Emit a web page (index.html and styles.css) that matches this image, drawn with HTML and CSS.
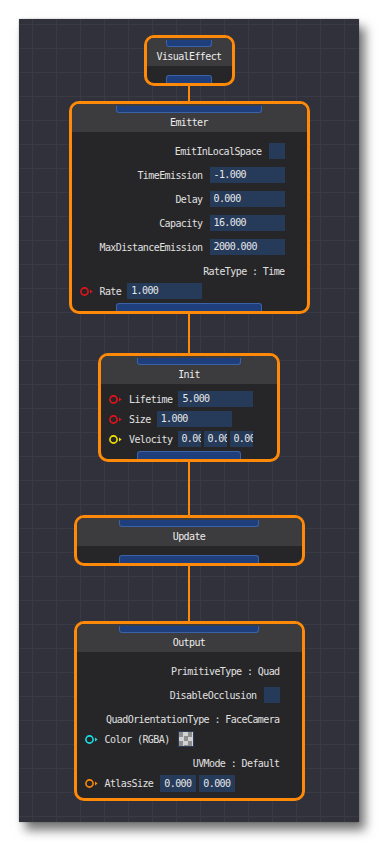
FILE: index.html
```html
<!DOCTYPE html>
<html lang="en">
<head>
    <meta charset="UTF-8">
    <meta name="viewport" content="width=device-width, initial-scale=1.0">
    <title>Visual Effect Graph</title>
    <link rel="stylesheet" href="styles.css">
</head>
<body>
    <div class="canvas">
        <div class="node node-ve">
            <div class="node-head">
                <div class="port port-in"></div>
                <div class="node-title">VisualEffect</div>
            </div>
            <div class="node-body node-body-empty">
                <div class="port port-out"></div>
            </div>
        </div>

        <div class="link link-a"></div>

        <div class="node node-emitter">
            <div class="node-head">
                <div class="port port-in"></div>
                <div class="node-title">Emitter</div>
            </div>
            <div class="node-body">
                <div class="row row-right"><span class="label">EmitInLocalSpace</span><span class="check"></span></div>
                <div class="row row-right"><span class="label">TimeEmission</span><span class="field">-1.000</span></div>
                <div class="row row-right"><span class="label">Delay</span><span class="field">0.000</span></div>
                <div class="row row-right"><span class="label">Capacity</span><span class="field">16.000</span></div>
                <div class="row row-right"><span class="label">MaxDistanceEmission</span><span class="field">2000.000</span></div>
                <div class="row row-right"><span class="label">RateType : Time</span></div>
                <div class="row row-pin">
                    <svg class="pin pin-red" viewBox="0 0 13 9"><circle cx="4.5" cy="4.5" r="3.6" fill="none" stroke="currentColor" stroke-width="1.6"/><path d="M10 2.5L12.6 4.5L10 6.5Z" fill="currentColor"/></svg>
                    <span class="label">Rate</span><span class="field">1.000</span>
                </div>
                <div class="port port-out"></div>
            </div>
        </div>

        <div class="link link-b"></div>

        <div class="node node-init">
            <div class="node-head">
                <div class="port port-in"></div>
                <div class="node-title">Init</div>
            </div>
            <div class="node-body">
                <div class="row row-pin">
                    <svg class="pin pin-red" viewBox="0 0 13 9"><circle cx="4.5" cy="4.5" r="3.6" fill="none" stroke="currentColor" stroke-width="1.6"/><path d="M10 2.5L12.6 4.5L10 6.5Z" fill="currentColor"/></svg>
                    <span class="label">Lifetime</span><span class="field">5.000</span>
                </div>
                <div class="row row-pin">
                    <svg class="pin pin-red" viewBox="0 0 13 9"><circle cx="4.5" cy="4.5" r="3.6" fill="none" stroke="currentColor" stroke-width="1.6"/><path d="M10 2.5L12.6 4.5L10 6.5Z" fill="currentColor"/></svg>
                    <span class="label">Size</span><span class="field">1.000</span>
                </div>
                <div class="row row-pin">
                    <svg class="pin pin-yellow" viewBox="0 0 13 9"><circle cx="4.5" cy="4.5" r="3.6" fill="none" stroke="currentColor" stroke-width="1.6"/><path d="M10 2.5L12.6 4.5L10 6.5Z" fill="currentColor"/></svg>
                    <span class="label">Velocity</span>
                    <span class="field-group">
                        <span class="field field-tiny">0.000</span>
                        <span class="field field-tiny">0.000</span>
                        <span class="field field-tiny">0.000</span>
                    </span>
                </div>
                <div class="port port-out"></div>
            </div>
        </div>

        <div class="link link-c"></div>

        <div class="node node-update">
            <div class="node-head">
                <div class="port port-in"></div>
                <div class="node-title">Update</div>
            </div>
            <div class="node-body node-body-empty">
                <div class="port port-out"></div>
            </div>
        </div>

        <div class="link link-d"></div>

        <div class="node node-output">
            <div class="node-head">
                <div class="port port-in"></div>
                <div class="node-title">Output</div>
            </div>
            <div class="node-body node-body-last">
                <div class="row row-right"><span class="label">PrimitiveType : Quad</span></div>
                <div class="row row-right"><span class="label">DisableOcclusion</span><span class="check"></span></div>
                <div class="row row-right"><span class="label">QuadOrientationType : FaceCamera</span></div>
                <div class="row row-pin">
                    <svg class="pin pin-cyan" viewBox="0 0 13 9"><circle cx="4.5" cy="4.5" r="3.6" fill="none" stroke="currentColor" stroke-width="1.6"/><path d="M10 2.5L12.6 4.5L10 6.5Z" fill="currentColor"/></svg>
                    <span class="label label-color">Color (RGBA)</span><span class="swatch"></span>
                </div>
                <div class="row row-right"><span class="label">UVMode : Default</span></div>
                <div class="row row-pin">
                    <svg class="pin pin-orange" viewBox="0 0 13 9"><circle cx="4.5" cy="4.5" r="3.6" fill="none" stroke="currentColor" stroke-width="1.6"/><path d="M10 2.5L12.6 4.5L10 6.5Z" fill="currentColor"/></svg>
                    <span class="label label-atlas">AtlasSize</span>
                    <span class="field-group">
                        <span class="field field-half">0.000</span>
                        <span class="field field-half">0.000</span>
                    </span>
                </div>
            </div>
        </div>
    </div>
</body>
</html>
```

FILE: styles.css
```css
* {
    margin: 0;
    padding: 0;
    box-sizing: border-box;
}

body {
    background: #fff;
    padding: 19px 20px 20px 19px;
    font-family: 'DejaVu Sans Mono', 'Liberation Mono', monospace;
    font-size: 10px;
    letter-spacing: -0.6px;
    color: #e2e2e2;
}

/* Graph canvas with grid */
.canvas {
    width: 340px;
    height: 803px;
    padding-top: 16px;
    display: flex;
    flex-direction: column;
    align-items: center;
    background-color: #30313a;
    background-image:
        linear-gradient(to right, #393a43 1px, transparent 1px),
        linear-gradient(to bottom, #393a43 1px, transparent 1px);
    background-size: 24px 24px;
    background-position: 13px 5px;
    box-shadow:
        0 0 2px rgba(0, 0, 0, 0.25),
        6px 8px 10px rgba(0, 0, 0, 0.55);
}

.link {
    width: 2px;
    background: #ff8a0a;
}

.link-a { height: 15px; }
.link-b { height: 39px; }
.link-c { height: 53px; }
.link-d { height: 55px; }

/* Nodes */
.node {
    border: 3px solid #ff8a0a;
    border-radius: 10px;
    background: #262628;
    overflow: hidden;
}

.node-ve { width: 91px; }
.node-emitter { width: 241px; }
.node-init { width: 182px; }
.node-update { width: 231px; }
.node-output { width: 231px; }

.node-head {
    height: 28px;
    padding-top: 2px;
    background: #3c3c3e;
    display: flex;
    flex-direction: column;
    align-items: center;
}

.node-title {
    line-height: 19px;
    text-align: center;
    color: #ececec;
}

.node-body {
    padding-top: 3px;
    display: flex;
    flex-direction: column;
}

.node-body-empty {
    padding-top: 9px;
}

.node-body-last {
    padding-bottom: 7px;
}

/* Flow ports */
.port {
    height: 8px;
    background: #1f3e7c;
    border: 1px solid #3b62a6;
    align-self: center;
}

.port-in {
    border-top: none;
    border-radius: 0 0 3px 3px;
}

.port-out {
    border-bottom: none;
    border-radius: 3px 3px 0 0;
    margin-top: 4px;
}

.node-body-empty .port-out { margin-top: 0; }

.node-ve .port { width: 46px; }
.node-emitter .port { width: 146px; }
.node-init .port { width: 104px; }
.node-update .port,
.node-output .port { width: 140px; }

/* Rows */
.row {
    height: 16px;
    display: flex;
    align-items: center;
    margin-top: 8px;
    white-space: nowrap;
}

.row-right {
    justify-content: flex-end;
    padding-right: 22px;
}

.row-pin {
    margin-top: 4px;
    padding-left: 8px;
}

.label {
    color: #e0e0e0;
}

.row-right .label + .field,
.row-right .label + .check {
    margin-left: 7px;
}

.row-pin .label {
    margin-left: 7px;
    margin-right: 6px;
}

.row-pin .label-color { margin-right: 8px; }
.row-pin .label-atlas { margin-right: 7px; }

.pin {
    width: 13px;
    height: 9px;
    flex-shrink: 0;
}

.pin-red { color: #e8121a; }
.pin-yellow { color: #f2e500; }
.pin-cyan { color: #19e0e6; }
.pin-orange { color: #ff8a0a; }

.field {
    display: block;
    width: 75px;
    height: 16px;
    line-height: 16px;
    padding-left: 4px;
    background: #263a5a;
    color: #e8e8e8;
    overflow: hidden;
}

.field-group {
    display: flex;
    gap: 3px;
}

.field-tiny {
    width: 23px;
    padding-left: 3px;
}

.field-half {
    width: 36px;
    height: 17px;
    line-height: 17px;
}

.check {
    width: 16px;
    height: 16px;
    background: #263a5a;
}

.swatch {
    width: 16px;
    height: 16px;
    border: 1px solid #2c3c58;
    background: repeating-conic-gradient(#d2d2d2 0 25%, #8e8e8e 0 50%) 0 0 / 9px 9px;
}
```
